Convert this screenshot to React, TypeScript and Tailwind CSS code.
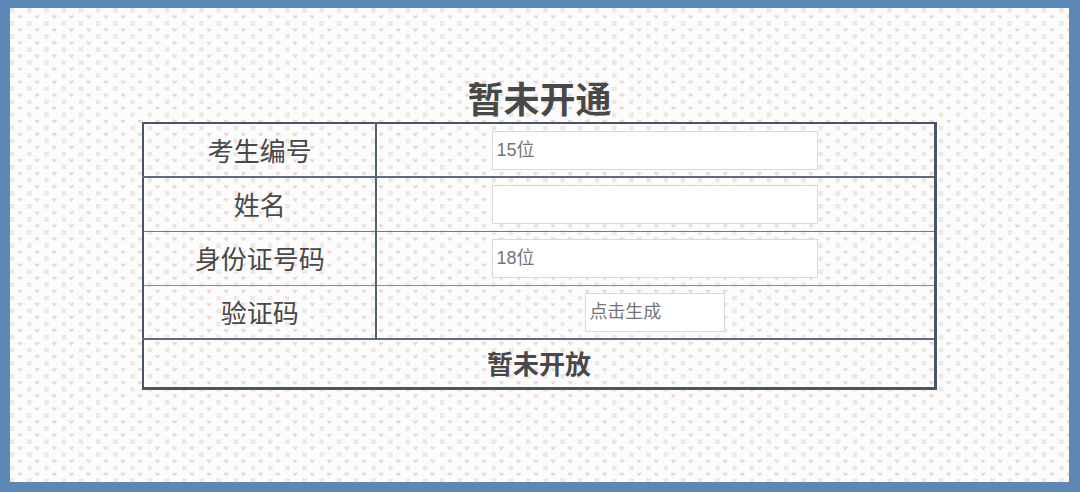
import React from 'react';

type Field = { id: string; label: string; placeholder: string; width: string; line: string };

const fields: Field[] = [
  { id: 'candidate', label: '考生编号', placeholder: '15位', width: 'w-[326px]', line: 'border-b-2 border-b-[#5f6c7e]' },
  { id: 'name', label: '姓名', placeholder: '', width: 'w-[326px]', line: 'border-b border-b-[#6f7b8a]' },
  { id: 'identity', label: '身份证号码', placeholder: '18位', width: 'w-[326px]', line: 'border-b border-b-[#848e9b]' },
  { id: 'captcha', label: '验证码', placeholder: '点击生成', width: 'w-[140px]', line: 'border-b-2 border-b-[#5f6c7e]' },
];

function Wallpaper() {
  return (
    <svg className="absolute inset-0 -z-10 h-full w-full" aria-hidden="true">
      <defs>
        <pattern id="hearts" width="17.2" height="13.07" patternUnits="userSpaceOnUse">
          <path d="M0 0h4.4v4.6H0z" fill="#f2f0e8" />
          <path d="M0.3 0.4h1.5v1.5H0.3zM2.6 0.4h1.5v1.5H2.6zM0.3 2.8h1.5v1.5H0.3zM2.6 2.8h1.5v1.5H2.6z" fill="#e2dfcd" />
          <path d="M7.6 7.2h1.8v0.9h0.9v-0.9h1.8v1.5h-0.8v0.9h-0.7v0.8h-1.5v-0.8h-0.7v-0.9h-0.8z" fill="#ebcdd0" />
        </pattern>
      </defs>
      <rect width="100%" height="100%" fill="url(#hearts)" />
    </svg>
  );
}

export default function App() {
  return (
    <main className="flex min-h-screen flex-col border-t-8 border-r-[11px] border-b-10 border-l-10 border-[#5b88b4] bg-[#fcfcfc] font-['Liberation_Sans','Noto_Sans_CJK_SC',sans-serif] text-[#484848]">
      <div className="relative isolate flex grow flex-col items-center pt-[72px]">
        <Wallpaper />
        <form className="w-3/4" onSubmit={(e) => e.preventDefault()}>
          <h1 className="text-center text-[36px] leading-[42px] font-bold">暂未开通</h1>
          <table className="w-full table-fixed border-collapse border-2 border-r-3 border-b-3 border-[#475569]">
            <colgroup>
              <col className="w-[29.4%]" />
              <col />
            </colgroup>
            <tbody>
              {fields.map((f) => (
                <tr key={f.id} className={`h-[54px] ${f.line}`}>
                  <th scope="row" className="border-r-2 border-r-[#526174] p-0 pt-1 text-center text-[26px] leading-9 font-normal">
                    <label htmlFor={f.id}>{f.label}</label>
                  </th>
                  <td className="p-0 pt-px text-center">
                    <input
                      id={f.id}
                      type="text"
                      placeholder={f.placeholder}
                      className={`${f.width} mx-auto block h-[39px] border border-[#d9d9d9] bg-white px-[3px] text-[18px] placeholder:text-[#757575]`}
                    />
                  </td>
                </tr>
              ))}
              <tr className="h-[49px]">
                <td colSpan={2} className="p-0 pt-1 text-center text-[26px] leading-9 font-bold">
                  暂未开放
                </td>
              </tr>
            </tbody>
          </table>
        </form>
      </div>
    </main>
  );
}
